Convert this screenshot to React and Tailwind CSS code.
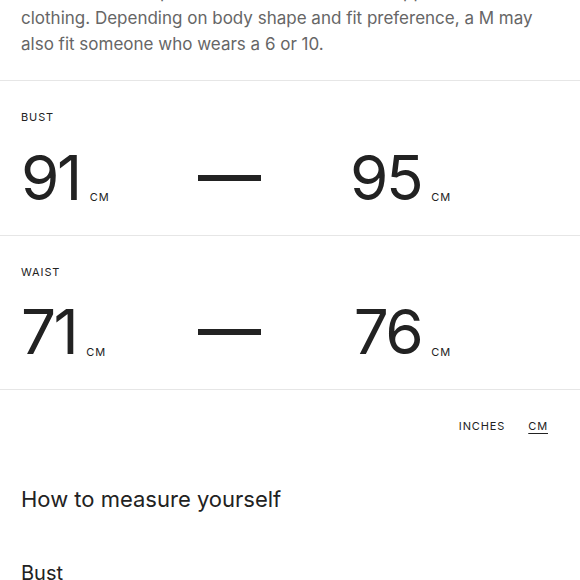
import React from "react";

const rows = [
  { label: "BUST", from: "91", to: "95" },
  { label: "WAIST", from: "71", to: "76" },
];

const Measure = ({ label, from, to }) => (
  <div className="border-b border-[#e6e6e6] px-[21px] pt-[28px] pb-[27px]">
    <div className="text-[11px] tracking-[0.08em] text-[#222]">{label}</div>
    <div className="mt-[22px] flex w-[430px] items-center justify-between">
      <div className="flex items-end">
        <span className="text-[62px] leading-[60px] tracking-[-0.04em] text-[#222]">{from}</span>
        <span className="mb-[2px] ml-[10px] text-[11px] tracking-[0.08em] text-[#222]">CM</span>
      </div>
      <div className="h-[6px] w-[63px] bg-[#222]" />
      <div className="flex items-end">
        <span className="text-[62px] leading-[60px] tracking-[-0.04em] text-[#222]">{to}</span>
        <span className="mb-[2px] ml-[10px] text-[11px] tracking-[0.08em] text-[#222]">CM</span>
      </div>
    </div>
  </div>
);

export default function App() {
  return (
    <div className="h-[580px] w-[580px] overflow-hidden bg-white font-['Inter',sans-serif]">
      {/* Intro text, first line scrolled off */}
      <div className="-mt-[21px] border-b border-[#e6e6e6] px-[21px] pb-[23px]">
        <p className="max-w-[515px] text-[17px] leading-[26px] text-[#666]">
          A size M is our equivalent to an AU 8 in most supplied women's
          clothing. Depending on body shape and fit preference, a M may also
          fit someone who wears a 6 or 10.
        </p>
      </div>

      {rows.map((r) => (
        <Measure key={r.label} {...r} />
      ))}

      {/* Unit toggle */}
      <div className="flex justify-end gap-[23px] px-[32px] pt-[28px]">
        <button className="text-[11px] tracking-[0.08em] text-[#222]">INCHES</button>
        <button className="text-[11px] tracking-[0.08em] text-[#222] underline underline-offset-[3px]">CM</button>
      </div>

      <h2 className="mt-[48px] px-[21px] text-[22px] text-[#222]">How to measure yourself</h2>
      <h3 className="mt-[42px] px-[21px] text-[20px] text-[#222]">Bust</h3>
    </div>
  );
}
